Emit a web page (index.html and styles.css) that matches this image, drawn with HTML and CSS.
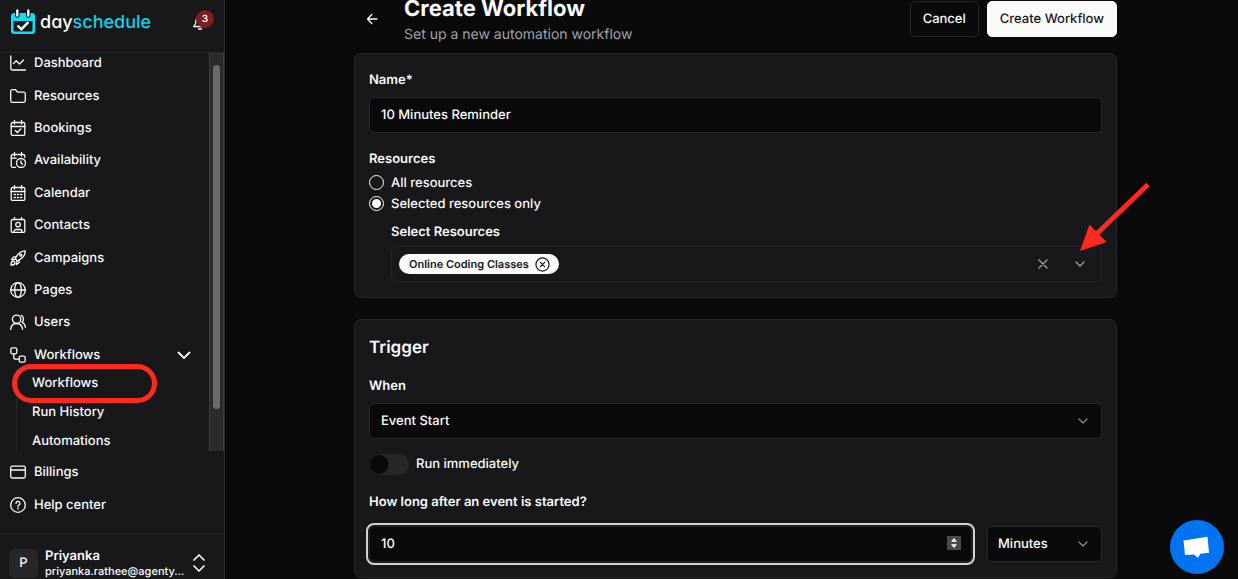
FILE: index.html
```html
<!DOCTYPE html>
<html lang="en">
<head>
<meta charset="utf-8">
<title>Create Workflow - DaySchedule</title>
<link rel="stylesheet" href="styles.css">
</head>
<body>
<div class="app">
  <aside class="sidebar">
    <header class="brand-bar">
      <a class="brand" href="#">
        <svg class="brand-mark" viewBox="0 0 26 26" width="26" height="26" aria-hidden="true">
          <rect x="1" y="4" width="24" height="21" rx="3" fill="#0be0f5"/>
          <path d="M3.500 12h19v9a1.600 1.600 0 0 1-1.600 1.600H5.100a1.600 1.600 0 0 1-1.600-1.600z" fill="#1a1a1c"/>
          <path d="M7.300 2v4.500M18.300 2v4.500" stroke="#18181b" stroke-width="4.600" stroke-linecap="round"/>
          <path d="M7.300 1.500v5M18.300 1.500v5" stroke="#f2f2f2" stroke-width="2.400" stroke-linecap="round"/>
          <path d="M7.500 16.500l3.900 3.700 7-7" fill="none" stroke="#f5f5f5" stroke-width="2.400"/>
        </svg>
        <span class="wordmark">day<span class="wordmark-accent">schedule</span></span>
      </a>
      <button class="bell" type="button" aria-label="Notifications">
        <svg viewBox="0 0 16 16" width="16" height="16" class="ico"><path d="M8 1.500a4 4 0 0 0-4 4c0 3.500-1 4.800-2.300 6h12.600C13 10.300 12 9 12 5.500a4 4 0 0 0-4-4zM6.500 14h3"/></svg>
        <span class="badge">3</span>
      </button>
    </header>

    <div class="nav-scroll">
      <nav class="nav-main">
        <ul class="nav-list">
          <li><a href="#"><svg class="ico" viewBox="0 0 16 16"><path d="M.800 1v12.500a1.500 1.500 0 0 0 1.500 1.500H15.500M3.500 8.500l2.700-2.700 3.300 3.200 4-4"/></svg>Dashboard</a></li>
          <li><a href="#"><svg class="ico" viewBox="0 0 16 16"><path d="M.700 3.200A1.500 1.500 0 0 1 2.200 1.700h3.300l2.300 2.500h6a1.500 1.500 0 0 1 1.500 1.500v7.100a1.500 1.500 0 0 1-1.500 1.500H2.200a1.500 1.500 0 0 1-1.500-1.500z"/></svg>Resources</a></li>
          <li><a href="#"><svg class="ico" viewBox="0 0 16 16"><rect x="1.200" y="2.500" width="13.600" height="13" rx="1.500"/><path d="M1.200 6.500h13.600M4.500.500v3.500M11.500.500v3.500M5.300 10.500l2 2 3.500-3.500"/></svg>Bookings</a></li>
          <li><a href="#"><svg class="ico" viewBox="0 0 16 16"><path d="M5.500 15.300H2.700a1.500 1.500 0 0 1-1.500-1.500V4a1.500 1.500 0 0 1 1.500-1.500h10.600A1.500 1.500 0 0 1 14.800 4v1.500M1.200 6.200h5M4.500.500v3.500M11.500.500v3.500"/><circle cx="11" cy="11" r="4.500"/><path d="M11 8.800V11l1.500 1.300"/></svg>Availability</a></li>
          <li><a href="#"><svg class="ico" viewBox="0 0 16 16"><rect x="1.200" y="2.500" width="13.600" height="13" rx="1.500"/><path d="M1.200 6.500h13.600M4.500.500v3.500M11.500.500v3.500"/><path d="M4.200 9.500h1.200M7.400 9.500h1.200M10.600 9.500h1.200M4.200 12.500h1.200M7.400 12.500h1.200M10.600 12.500h1.200"/></svg>Calendar</a></li>
          <li><a href="#"><svg class="ico" viewBox="0 0 16 16"><rect x="1.200" y="2.500" width="13.600" height="13" rx="1.500"/><path d="M4.500.500v2M11.500.500v2M4 15.300v-.800a2 2 0 0 1 2-2h4a2 2 0 0 1 2 2v.800"/><circle cx="8" cy="7.600" r="2.300"/></svg>Contacts</a></li>
          <li><a href="#"><svg class="ico" viewBox="0 0 16 16"><path d="M5.300 8.800C7 4.500 10 1 15.300.800 15.200 6 11.500 9.200 7.200 10.800zM6.200 6.900H3.600L1.500 9.600l3.800-.400M9.200 9.800v2.700l-2.800 2.100.500-3.900M1 15.200c0-2.300.500-3.800 2-4.200 1.300 0 2 .900 1.900 2-.300 1.500-1.700 2.200-3.900 2.200z"/><circle cx="10.800" cy="5.200" r="1"/></svg>Campaigns</a></li>
          <li><a href="#"><svg class="ico" viewBox="0 0 16 16"><circle cx="8" cy="8" r="7.300"/><ellipse cx="8" cy="8" rx="3.300" ry="7.300"/><path d="M.700 8h14.600"/></svg>Pages</a></li>
          <li><a href="#"><svg class="ico" viewBox="0 0 16 16"><circle cx="6.600" cy="5.300" r="4.200"/><path d="M.600 15.300c.500-3.500 2.700-5.800 6-5.800s5.500 2.300 6 5.800M11.300 1.400c2.400 1.400 2.900 4.800.700 6.800 2 1 3.200 3 3.500 5.200"/></svg>Users</a></li>
          <li><a href="#" aria-expanded="true"><svg class="ico" viewBox="0 0 16 16"><rect x=".800" y=".800" width="6" height="6" rx="1.500"/><rect x="9.200" y="9.200" width="6" height="6" rx="1.500"/><path d="M3.800 6.800v3.400a2 2 0 0 0 2 2h3.400"/></svg>Workflows<svg class="ico nav-caret" viewBox="0 0 16 16"><path d="M2.500 5.500L8 11l5.500-5.500"/></svg></a></li>
        </ul>
        <ul class="subnav">
          <li><a href="#" aria-current="page">Workflows</a></li>
          <li><a href="#">Run History</a></li>
          <li><a href="#">Automations</a></li>
        </ul>
      </nav>
      <div class="scroll-track"><div class="scroll-thumb"></div></div>
    </div>

    <ul class="nav-foot">
      <li><a href="#"><svg class="ico" viewBox="0 0 16 16"><rect x=".700" y="2.200" width="14.600" height="11.800" rx="1.500"/><path d="M.700 6h14.600"/></svg>Billings</a></li>
      <li><a href="#"><svg class="ico" viewBox="0 0 16 16"><circle cx="8" cy="8" r="7.300"/><path d="M6 6.400a2 2 0 1 1 2.900 1.800c-.600.300-.900.600-.900 1.300M8 11v1.100"/></svg>Help center</a></li>
    </ul>

    <button class="account" type="button">
      <span class="avatar">P</span>
      <span class="account-text"><strong>Priyanka</strong><span class="email">priyanka.rathee@agenty...</span></span>
      <svg class="ico account-caret" viewBox="0 0 16 20"><path d="M3 7l5-5 5 5M3 13l5 5 5-5"/></svg>
    </button>
    <span class="mark-ring"></span>
  </aside>

  <main class="page">
    <header class="page-head">
      <a class="back" href="#" aria-label="Back"><svg class="ico" viewBox="0 0 16 16"><path d="M13 8H3.500M7.800 3.500L3.500 8l4.300 4.500"/></svg></a>
      <div class="titles">
        <h1>Create Workflow</h1>
        <p>Set up a new automation workflow</p>
      </div>
      <button class="btn" type="button">Cancel</button>
      <button class="btn btn-primary" type="submit" form="workflow">Create Workflow</button>
    </header>

    <form id="workflow" class="cards">
      <section class="card">
        <label class="label" for="name">Name*</label>
        <input class="control" id="name" type="text" value="10 Minutes Reminder">
        <fieldset class="radios">
          <legend class="label">Resources</legend>
          <label class="radio"><input type="radio" name="scope">All resources</label>
          <label class="radio"><input type="radio" name="scope" checked>Selected resources only</label>
        </fieldset>
        <div class="nested">
          <span class="label" id="pick-label">Select Resources</span>
          <div class="multi" role="group" aria-labelledby="pick-label">
            <span class="chip">Online Coding Classes
              <button type="button" aria-label="Remove Online Coding Classes"><svg viewBox="0 0 16 16" class="ico"><circle cx="8" cy="8" r="7"/><path d="M5.700 5.700l4.600 4.600M10.300 5.700l-4.600 4.600"/></svg></button>
            </span>
            <button class="tool" type="button" aria-label="Clear all"><svg class="ico" viewBox="0 0 16 16"><path d="M4 4l8 8M12 4l-8 8"/></svg></button>
            <button class="tool" type="button" aria-label="Open list"><svg class="ico" viewBox="0 0 16 16"><path d="M4 6l4 4 4-4"/></svg></button>
          </div>
        </div>
      </section>

      <section class="card">
        <h2>Trigger</h2>
        <label class="label" for="when">When</label>
        <div class="select">
          <select class="control" id="when"><option>Event Start</option></select>
          <svg class="ico" viewBox="0 0 16 16"><path d="M4 6l4 4 4-4"/></svg>
        </div>
        <label class="toggle"><input type="checkbox" role="switch">Run immediately</label>
        <label class="label" for="delay">How long after an event is started?</label>
        <div class="delay">
          <div class="number">
            <input class="control is-focused" id="delay" type="number" value="10">
            <svg class="stepper" viewBox="0 0 14 14" aria-hidden="true"><path d="M7 2l3 3.800H4zM7 12l3-3.800H4z"/></svg>
          </div>
          <div class="select">
            <select class="control" aria-label="Time unit"><option>Minutes</option></select>
            <svg class="ico" viewBox="0 0 16 16"><path d="M4 6l4 4 4-4"/></svg>
          </div>
        </div>
      </section>
    </form>
  </main>
</div>

<svg class="mark-arrow" viewBox="0 0 70 70" aria-hidden="true"><path d="M68 2.500L17 51.500" stroke="#ff2a1f" stroke-width="5"/><path d="M0 69L9.500 42.500 26.500 60z" fill="#ff2a1f"/></svg>
<button class="chat" type="button" aria-label="Open chat"><svg viewBox="0 0 54 54" aria-hidden="true"><path d="M13.500 20.500L37.500 16.800 39 32.800 30.500 33.800 27.800 37.800 24 34.500 15 35z" fill="#fff"/></svg></button>
</body>
</html>
```
FILE: styles.css
```css
* { box-sizing: border-box; }
body {
  margin: 0;
  background: #0a0a0a;
  color: #fafafa;
  font: 500 13px/20px Inter, sans-serif;
  text-rendering: geometricPrecision;
  overflow: hidden;
}
button, input, select { font: inherit; color: inherit; text-rendering: inherit; }
button { padding: 0; border: 0; background: none; }
a { color: inherit; text-decoration: none; }
ul { list-style: none; margin: 0; padding: 0; }
.ico {
  width: 16px;
  height: 16px;
  flex: none;
  fill: none;
  stroke: currentColor;
  stroke-width: 1.3;
  stroke-linecap: round;
  stroke-linejoin: round;
}
.app { display: flex; height: 100vh; }

/* Sidebar */
.sidebar {
  position: relative;
  flex: none;
  width: 225px;
  display: flex;
  flex-direction: column;
  background: #18181b;
  border-right: 1px solid #27272a;
}
.brand-bar {
  flex: none;
  display: flex;
  justify-content: space-between;
  height: 53px;
  padding: 9px 10px 0;
  border-bottom: 1px solid #27272a;
}
.brand { display: flex; gap: 4px; height: 26px; }
.wordmark {
  font-size: 18px;
  line-height: 28px;
  font-feature-settings: "cv11";
}
.wordmark-accent { color: #0bd3e8; }
.bell { position: relative; width: 22px; height: 22px; text-align: left; }
.bell svg { display: block; margin-top: 6px; }
.badge {
  position: absolute;
  top: 1px;
  right: 0;
  width: 18px;
  height: 18px;
  border-radius: 50%;
  background: #7f1d1d;
  font-size: 10px;
  font-weight: 600;
  line-height: 18px;
  text-align: center;
}
.nav-scroll { flex: 1; min-height: 0; display: flex; overflow: hidden; }
.nav-main { flex: 1; }
.nav-list {
  display: grid;
  grid-auto-rows: 1fr;
  height: 324px;
  margin-top: -6px;
}
.nav-list a, .nav-foot a {
  display: flex;
  align-items: center;
  gap: 8px;
  height: 100%;
  padding: 0 17px 0 10px;
}
.nav-list .nav-caret { margin-left: auto; stroke-width: 1.8; }
.subnav {
  margin: -2px 0 0 16px;
  padding-left: 15px;
  border-left: 1px solid #27272a;
}
.subnav a { display: block; line-height: 29px; }
.scroll-track {
  width: 15px;
  padding: 12px 3px 42px;
  background: #2b2b2b;
  border: solid #3f3f3f;
  border-width: 0 1px;
}
.scroll-thumb { height: 100%; border-radius: 4px; background: #6b6b6b; }
.nav-foot {
  flex: none;
  display: grid;
  grid-auto-rows: 33px;
  padding: 4px 0 12px;
}
.account {
  flex: none;
  display: flex;
  align-items: flex-start;
  height: 46px;
  padding: 15px 17px 0 9px;
  border-top: 1px solid #27272a;
  text-align: left;
}
.avatar {
  flex: none;
  width: 29px;
  height: 29px;
  margin-right: 7px;
  border-radius: 6px;
  background: #27272a;
  line-height: 28px;
  text-align: center;
}
.account-text { display: grid; line-height: 15px; }
.account-text strong { font-weight: 600; }
.email { font-size: 11px; }
.account .account-caret { height: 20px; margin: 4px 0 0 auto; stroke-width: 1.7; }

/* Page */
.page { flex: 1; min-width: 0; padding: 1px 121px 0 129px; }
.page-head { display: flex; align-items: flex-start; gap: 8px; height: 52px; }
.back { width: 36px; height: 36px; padding: 10px; margin-right: 6px; }
.titles { flex: 1; margin-top: -5px; }
h1 { margin: 0; font-size: 22px; line-height: 26px; font-weight: 700; }
.titles p { margin: 3px 0 0; font-size: 14px; font-weight: 400; color: #a1a1aa; }
.btn {
  height: 36px;
  padding: 0 12px;
  border: 1px solid #27272a;
  border-radius: 5px;
}
.btn-primary { background: #fafafa; border-color: #fafafa; color: #18181b; }
.cards { display: grid; gap: 21px; }
.card {
  padding: 15px 14px;
  background: #18181b;
  border: 1px solid #27272a;
  border-radius: 7px;
}
.label { display: block; padding: 0; font-weight: 600; line-height: 22px; }
.control {
  display: block;
  width: 100%;
  height: 36px;
  padding: 0 11px;
  background: #0a0a0a;
  border: 1px solid #27272a;
  border-radius: 5px;
  appearance: none;
  outline: none;
}
.label + .control, .label + .select { margin-top: 6px; }
.radios { margin: 15px 0 0; padding: 0; border: 0; }
.radios legend { margin-bottom: 2px; }
.radio { display: flex; align-items: center; gap: 7px; height: 21px; }
.radio input {
  appearance: none;
  width: 15px;
  height: 15px;
  margin: 0;
  border: 1px solid #fafafa;
  border-radius: 50%;
}
.radio input:checked { background: radial-gradient(circle, #fafafa 4px, transparent 5px); }
.nested { margin: 7px 0 0 22px; }
.multi {
  display: flex;
  align-items: center;
  height: 36px;
  margin-top: 3px;
  padding: 0 13px 0 7px;
  border: 1px solid #27272a;
  border-radius: 5px;
}
.chip {
  display: flex;
  align-items: center;
  gap: 6px;
  margin-right: auto;
  padding: 0 9px 0 10px;
  border-radius: 10px;
  background: #fafafa;
  color: #18181b;
  font-size: 11px;
  font-weight: 600;
}
.chip button, .chip svg { display: block; width: 15px; height: 15px; }
.tool { width: 16px; height: 16px; margin-left: 21px; color: #a1a1aa; }
.tool svg { display: block; }
h2 { margin: 0 0 14px; font-size: 17px; line-height: 26px; font-weight: 600; }
.select { position: relative; }
.select .ico {
  position: absolute;
  top: 10px;
  right: 11px;
  color: #8a8a90;
  pointer-events: none;
}
.toggle { display: flex; align-items: center; gap: 7px; margin: 14px 0 16px; height: 22px; }
.toggle input {
  appearance: none;
  width: 40px;
  height: 21px;
  margin: 0;
  border-radius: 11px;
  background: radial-gradient(circle at 10px 50%, #0a0a0a 9px, transparent 10px) #27272a;
}
.delay { display: grid; grid-template-columns: 1fr 115px; gap: 15px; margin-top: 13px; }
.delay .select .control { padding: 0 10px; }
.number { position: relative; }
.number input { appearance: textfield; }
.number input::-webkit-inner-spin-button { display: none; }
.is-focused { outline: 2px solid #d4d4d8; outline-offset: 1px; }
.stepper {
  position: absolute;
  top: 10px;
  right: 11px;
  width: 14px;
  height: 14px;
  background: #4a4a4a;
  fill: #fff;
}

/* Overlays */
.mark-ring {
  position: absolute;
  left: 12px;
  top: 364px;
  width: 145px;
  height: 39px;
  border: 5px solid #ff2a1f;
  border-radius: 20px;
}
.mark-arrow { position: fixed; left: 1080px; top: 182px; width: 70px; height: 70px; }
.chat {
  position: fixed;
  right: 14px;
  bottom: 5px;
  width: 54px;
  height: 54px;
  border-radius: 50%;
  background: #0074f0;
}
.chat svg { display: block; }
```
